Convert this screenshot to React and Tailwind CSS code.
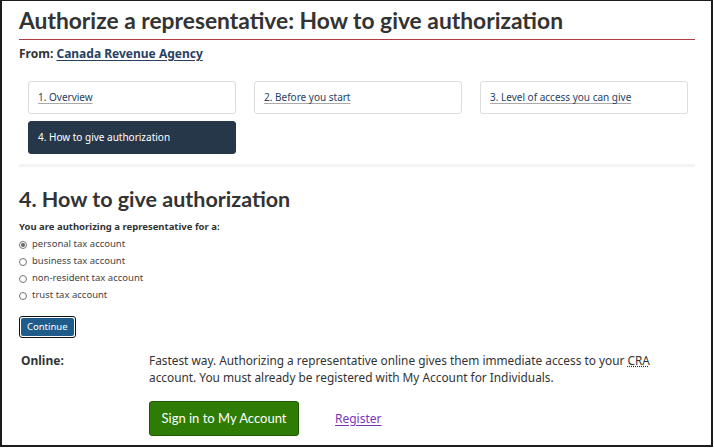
import React from "react";

const navItems = [
  { label: "1. Overview" },
  { label: "2. Before you start" },
  { label: "3. Level of access you can give" },
];

const options = [
  "personal tax account",
  "business tax account",
  "non-resident tax account",
  "trust tax account",
];

function Radio({ checked }) {
  return (
    <span className="inline-flex h-[8px] w-[8px] items-center justify-center rounded-full border border-[#767676] bg-white">
      {checked ? <span className="h-[4px] w-[4px] rounded-full bg-[#666]" /> : null}
    </span>
  );
}

export default function App() {
  return (
    <div className="h-[448px] w-[714px] bg-white">
      <div className="h-[447px] w-[713px] border-2 border-t border-[#1c1c1c] font-['Noto_Sans',sans-serif] text-[#333]">
        <div className="pl-[17px] pr-[16px]">
          <h1 className="pb-[5px] pt-[6px] font-['Lato',sans-serif] text-[22.8px] font-bold leading-[27px] text-[#333]">
            Authorize a representative: How to give authorization
          </h1>
          <div className="h-px bg-[#af3c43]" />
          <p className="mt-[5px] text-[12px] font-bold leading-[18px]">
            From:{" "}
            <a href="#" className="text-[#284162] underline underline-offset-2">
              Canada Revenue Agency
            </a>
          </p>

          <div className="mt-[18px] border-b-[3px] border-[#f3f3f3] pb-[10px] pl-[9px] pr-[7px]">
            <div className="grid grid-cols-3 gap-x-[18px] gap-y-[7px]">
              {navItems.map((item) => (
                <div
                  key={item.label}
                  className="flex h-[33px] items-center rounded-[3px] border border-[#ddd] bg-white px-[9px]"
                >
                  <a href="#" className="text-[10px] text-[#284162] underline decoration-[#aaa] underline-offset-2">
                    {item.label}
                  </a>
                </div>
              ))}
              <div className="flex h-[33px] items-center rounded-[3px] border border-[#26374a] bg-[#26374a] px-[9px]">
                <span className="text-[10px] text-white">4. How to give authorization</span>
              </div>
            </div>
          </div>

          <h2 className="mt-[18px] font-['Lato',sans-serif] text-[21.5px] font-bold leading-[28px]">
            4. How to give authorization
          </h2>
          <p className="mt-[7px] text-[9.5px] font-bold leading-[14px]">
            You are authorizing a representative for a:
          </p>
          <div className="mt-[2px] flex flex-col">
            {options.map((o, i) => (
              <label key={o} className="flex h-[17px] items-center gap-[5px] text-[9.5px] text-[#444]">
                <Radio checked={i === 0} />
                {o}
              </label>
            ))}
          </div>
          <button className="mt-[12px] rounded-[3px] border border-[#111] bg-white p-[1px]">
            <span className="block rounded-[2px] bg-[#1f5c8c] px-[6px] py-[3px] text-[9.5px] leading-[12px] text-white">
              Continue
            </span>
          </button>

          <div className="mt-[14px] flex">
            <div className="w-[130px] pl-[2px] text-[12px] font-bold leading-[17px]">Online:</div>
            <div className="flex-1">
              <p className="text-[11.85px] leading-[17px]">
                Fastest way. Authorizing a representative online gives them immediate access to your{" "}
                <abbr className="no-underline [text-decoration:underline_dotted]">CRA</abbr> account. You must
                already be registered with My Account for Individuals.
              </p>
              <div className="mt-[15px] flex items-center">
                <a
                  href="#"
                  className="flex h-[35px] w-[150px] items-center justify-center rounded-[3px] border border-[#1e5a00] bg-[#2e7c05] font-['Lato',sans-serif] text-[13px] text-white"
                >
                  Sign in to My Account
                </a>
                <a href="#" className="ml-[36px] text-[12px] text-[#7834bc] underline underline-offset-2">
                  Register
                </a>
              </div>
            </div>
          </div>
        </div>
      </div>
    </div>
  );
}
